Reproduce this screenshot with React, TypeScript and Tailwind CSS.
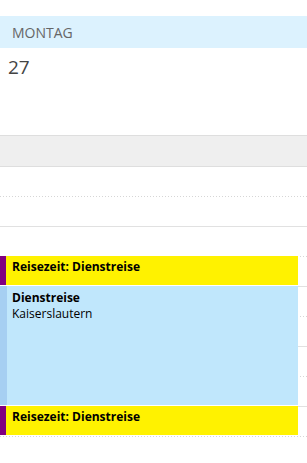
import React from "react";

const font = { fontFamily: '"Open Sans", "Noto Sans", sans-serif' };

function Row({ dotted }: { dotted: boolean }) {
  return (
    <div className="relative h-[30px]">
      {dotted ? (
        <div className="absolute bottom-0 left-0 right-0 h-px bg-[linear-gradient(to_right,#d6d6d6_1px,transparent_1px)] bg-[length:3px_1px]" />
      ) : (
        <div className="absolute bottom-0 left-0 right-0 h-px bg-[#e1e1e1]" />
      )}
    </div>
  );
}

function Travel({ top }: { top: number }) {
  return (
    <div
      className="absolute left-0 w-[298px] h-[29px] flex bg-[#fff200]"
      style={{ top }}
    >
      <div className="w-[6px] h-full bg-[#800080]" />
      <div className="pl-[6px] pt-[3px] text-[12px] leading-[16px] font-bold text-black">
        Reisezeit: Dienstreise
      </div>
    </div>
  );
}

export default function App() {
  const rows = [] as React.ReactNode[];
  for (let i = 0; i < 10; i++) rows.push(<Row key={i} dotted={i % 2 === 0} />);
  return (
    <div className="w-[307px] h-[463px] overflow-hidden bg-white" style={font}>
      <div className="h-[16px]" />
      <div className="h-[32px] bg-[#dcf2fe] flex items-center pl-[12px] text-[14px] text-[#666666]">
        MONTAG
      </div>
      <div className="h-[87px] pl-[8px] pt-[6px] text-[19px] leading-[26px] text-[#444444]">
        27
      </div>
      <div className="h-[32px] bg-[#efefef] border-y border-[#dedede]" />
      <div className="relative">
        {rows}
        <Travel top={89} />
        <div className="absolute left-0 top-[119px] w-[298px] h-[119px] flex bg-[#c0e7fc]">
          <div className="w-[7px] h-full bg-[#a6cff2]" />
          <div className="pl-[5px] pt-[4px] text-[12px] leading-[16px] text-black">
            <div className="font-bold">Dienstreise</div>
            <div>Kaiserslautern</div>
          </div>
        </div>
        <Travel top={239} />
      </div>
    </div>
  );
}
